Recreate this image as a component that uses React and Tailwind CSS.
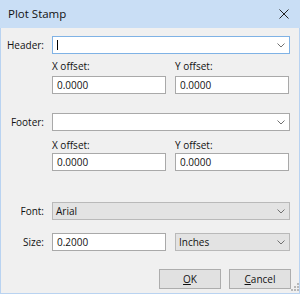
import React from "react";

function Chevron() {
  return (
    <svg width="8" height="5" viewBox="0 0 8 5" className="shrink-0">
      <path d="M0.5 0.5 L4 4 L7.5 0.5" fill="none" stroke="#707070" strokeWidth="1" />
    </svg>
  );
}

function Combo({ value, focused, disabled, className = "" }) {
  const border = focused
    ? "border-[#7fb2e5]"
    : disabled
    ? "border-[#b9b9b9]"
    : "border-[#a9a9a9]";
  const bg = disabled ? "bg-[#e3e3e3]" : "bg-white";
  return (
    <div
      className={`h-[18px] border ${border} ${bg} flex items-center pl-[3px] pr-[4px] ${className}`}
    >
      <div className="flex-1 flex items-center text-[10px] text-[#111]">
        {focused && <span className="block w-px h-[10px] bg-black ml-[1px]" />}
        {value}
      </div>
      <Chevron />
    </div>
  );
}

function Field({ value, className = "" }) {
  return (
    <div
      className={`h-[18px] border border-[#a9a9a9] bg-white flex items-center pl-[4px] text-[10px] text-[#111] ${className}`}
    >
      {value}
    </div>
  );
}

function Label({ children }) {
  return (
    <div className="w-[43px] text-right text-[10px] text-[#111] shrink-0">
      {children}
    </div>
  );
}

function Offsets({ top }) {
  return (
    <div className={`ml-[51px] ${top}`}>
      <div className="grid grid-cols-[114px_114px] gap-x-[9px] text-[10px] text-[#111] h-[14px] leading-[14px]">
        <div>X offset:</div>
        <div>Y offset:</div>
      </div>
      <div className="grid grid-cols-[114px_114px] gap-x-[9px] mt-[3px]">
        <Field value="0.0000" />
        <Field value="0.0000" />
      </div>
    </div>
  );
}

export default function App() {
  return (
    <div
      className="w-[300px] h-[294px] bg-[#f0f0f0] relative overflow-hidden"
      style={{ fontFamily: '"Open Sans", "Noto Sans", sans-serif' }}
    >
      <div className="h-[28px] bg-[#c9def5] flex items-center justify-between pl-[8px] pr-[11px]">
        <span className="text-[11.5px] text-[#111]">Plot Stamp</span>
        <svg width="10" height="10" viewBox="0 0 10 10">
          <path d="M0.5 0.5 L9.5 9.5 M9.5 0.5 L0.5 9.5" stroke="#222" strokeWidth="1" />
        </svg>
      </div>
      <div className="h-[266px] border-x border-b border-[#b9d3f1] flex flex-col pt-[8px]">
        <div className="flex items-center gap-[8px]">
          <Label>Header:</Label>
          <Combo value="" focused className="w-[238px]" />
        </div>
        <Offsets top="mt-[5px]" />

        <div className="flex items-center gap-[8px] mt-[19px]">
          <Label>Footer:</Label>
          <Combo value="" className="w-[238px]" />
        </div>
        <div className="ml-[51px] mt-[7px]">
          <div className="grid grid-cols-[114px_114px] gap-x-[9px] text-[10px] text-[#111] h-[14px] leading-[14px]">
            <div>X offset:</div>
            <div>Y offset:</div>
          </div>
          <div className="grid grid-cols-[114px_114px] gap-x-[9px] mt-[1px]">
            <Field value="0.0000" />
            <Field value="0.0000" />
          </div>
        </div>

        <div className="flex items-center gap-[8px] mt-[31px]">
          <Label>Font:</Label>
          <Combo value="Arial" disabled className="w-[238px]" />
        </div>

        <div className="flex items-center gap-[8px] mt-[13px]">
          <Label>Size:</Label>
          <Field value="0.2000" className="w-[114px]" />
          <Combo value="Inches" disabled className="w-[115px] ml-[1px]" />
        </div>

        <div className="flex justify-end gap-[8px] mt-[18px] pr-[8px]">
          <button className="w-[62px] h-[20px] bg-[#e1e1e1] border border-[#adadad] text-[10px] text-[#111]">
            <span className="underline">O</span>K
          </button>
          <button className="w-[62px] h-[20px] bg-[#e1e1e1] border border-[#adadad] text-[10px] text-[#111]">
            <span className="underline">C</span>ancel
          </button>
        </div>
      </div>
      <svg
        width="10"
        height="10"
        viewBox="0 0 10 10"
        className="absolute right-[1px] bottom-[1px]"
      >
        <rect x="8" y="0" width="2" height="2" fill="#b8b8b8" />
        <rect x="5" y="3" width="2" height="2" fill="#b8b8b8" />
        <rect x="8" y="3" width="2" height="2" fill="#b8b8b8" />
        <rect x="2" y="6" width="2" height="2" fill="#b8b8b8" />
        <rect x="5" y="6" width="2" height="2" fill="#b8b8b8" />
        <rect x="8" y="6" width="2" height="2" fill="#b8b8b8" />
      </svg>
    </div>
  );
}
